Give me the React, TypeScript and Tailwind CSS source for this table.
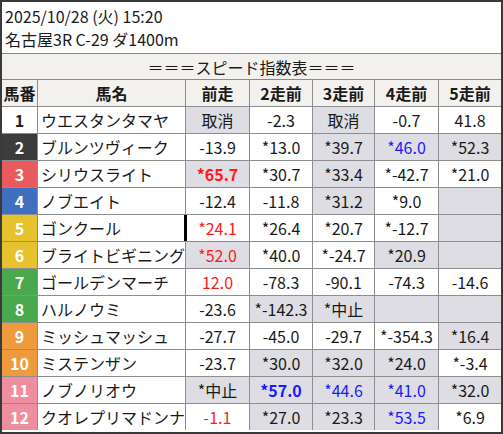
import React from "react"

type Cell = { v: string; grey?: boolean; color?: "red" | "blue"; bold?: boolean; mark?: boolean }

const badge: Record<number, string> = {
  1: "bg-white text-[#222]",
  2: "bg-[#3c3c3c] text-white",
  3: "bg-[#e85a5c] text-white",
  4: "bg-[#416fc0] text-white",
  5: "bg-[#e6c22e] text-white",
  6: "bg-[#e6c22e] text-white",
  7: "bg-[#4aa84e] text-white",
  8: "bg-[#4aa84e] text-white",
  9: "bg-[#ef9a3c] text-white",
  10: "bg-[#ef9a3c] text-white",
  11: "bg-[#ef8e9e] text-white",
  12: "bg-[#ef8e9e] text-white",
}

const rows: { no: number; name: string; cells: Cell[] }[] = [
  { no: 1, name: "ウエスタンタマヤ", cells: [{ v: "取消", grey: true }, { v: "-2.3" }, { v: "取消", grey: true }, { v: "-0.7" }, { v: "41.8" }] },
  { no: 2, name: "ブルンツヴィーク", cells: [{ v: "-13.9" }, { v: "*13.0" }, { v: "*39.7", grey: true }, { v: "*46.0", grey: true, color: "blue" }, { v: "*52.3", grey: true }] },
  { no: 3, name: "シリウスライト", cells: [{ v: "*65.7", grey: true, color: "red", bold: true }, { v: "*30.7" }, { v: "*33.4", grey: true }, { v: "*-42.7" }, { v: "*21.0" }] },
  { no: 4, name: "ノブエイト", cells: [{ v: "-12.4" }, { v: "-11.8" }, { v: "*31.2", grey: true }, { v: "*9.0" }, { v: "", grey: true }] },
  { no: 5, name: "ゴンクール", cells: [{ v: "*24.1", color: "red", mark: true }, { v: "*26.4" }, { v: "*20.7" }, { v: "*-12.7" }, { v: "", grey: true }] },
  { no: 6, name: "ブライトビギニング", cells: [{ v: "*52.0", grey: true, color: "red" }, { v: "*40.0" }, { v: "*-24.7" }, { v: "*20.9", grey: true }, { v: "", grey: true }] },
  { no: 7, name: "ゴールデンマーチ", cells: [{ v: "12.0", color: "red" }, { v: "-78.3" }, { v: "-90.1" }, { v: "-74.3" }, { v: "-14.6" }] },
  { no: 8, name: "ハルノウミ", cells: [{ v: "-23.6" }, { v: "*-142.3", grey: true }, { v: "*中止", grey: true }, { v: "", grey: true }, { v: "", grey: true }] },
  { no: 9, name: "ミッシュマッシュ", cells: [{ v: "-27.7" }, { v: "-45.0" }, { v: "-29.7" }, { v: "*-354.3" }, { v: "*16.4", grey: true }] },
  { no: 10, name: "ミステンザン", cells: [{ v: "-23.7" }, { v: "*30.0", grey: true }, { v: "*32.0", grey: true }, { v: "*24.0", grey: true }, { v: "*-3.4" }] },
  { no: 11, name: "ノブノリオウ", cells: [{ v: "*中止", grey: true }, { v: "*57.0", grey: true, color: "blue", bold: true }, { v: "*44.6", grey: true, color: "blue" }, { v: "*41.0", grey: true, color: "blue" }, { v: "*32.0", grey: true }] },
  { no: 12, name: "クオレプリマドンナ", cells: [{ v: "-1.1", color: "red" }, { v: "*27.0", grey: true }, { v: "*23.3", grey: true }, { v: "*53.5", grey: true, color: "blue" }, { v: "*6.9" }] },
]

const heads = ["前走", "2走前", "3走前", "4走前", "5走前"]

export default function App() {
  return (
    <div
      className="w-[503px] h-[434px] border-2 border-[#3a3a3a] bg-white text-[#1a1a1a] flex flex-col overflow-hidden"
      style={{ fontFamily: '"Noto Sans CJK JP", "Noto Sans", sans-serif' }}
    >
      {/* race info */}
      <div className="h-[52px] px-[3px] pt-[2px] flex flex-col text-[16px] leading-[24px] border-b border-[#8a8a8a]">
        <div>2025/10/28 (火) 15:20</div>
        <div className="-mt-[1px]">名古屋3R C-29 ダ1400m</div>
      </div>

      <div className="h-[26px] bg-[#f2f1ed] border-b border-[#8a8a8a] flex items-center justify-center text-[16px] leading-none">
        ＝＝＝スピード指数表＝＝＝
      </div>

      <div className="grid grid-cols-[35px_147px_63px_62px_61px_63px_62px] auto-rows-[26px] gap-px bg-[#8e8e8e] text-[16px] leading-none">
        <div className="bg-[#f2f1ed] flex items-center justify-center font-bold">馬番</div>
        <div className="bg-[#f2f1ed] flex items-center justify-center font-bold">馬名</div>
        {heads.map((h) => (
          <div key={h} className="bg-[#f2f1ed] flex items-center justify-center font-bold">{h}</div>
        ))}

        {rows.map((r) => (
          <React.Fragment key={r.no}>
            <div className={`${badge[r.no]} flex items-center justify-center font-bold`}>{r.no}</div>
            <div className="bg-white flex items-center pl-[3px] whitespace-nowrap overflow-hidden">{r.name}</div>
            {r.cells.map((c, i) => (
              <div
                key={i}
                className={`relative flex items-center justify-center whitespace-nowrap ${c.grey ? "bg-[#dddde3]" : "bg-white"} ${
                  c.color === "red" ? "text-[#ff1a1a]" : c.color === "blue" ? "text-[#1a1aff]" : ""
                } ${c.bold ? "font-bold" : ""}`}
              >
                {c.mark && <span className="absolute -left-[2px] top-0 bottom-0 w-[3px] bg-black" />}
                {c.v}
              </div>
            ))}
          </React.Fragment>
        ))}
      </div>
    </div>
  )
}
